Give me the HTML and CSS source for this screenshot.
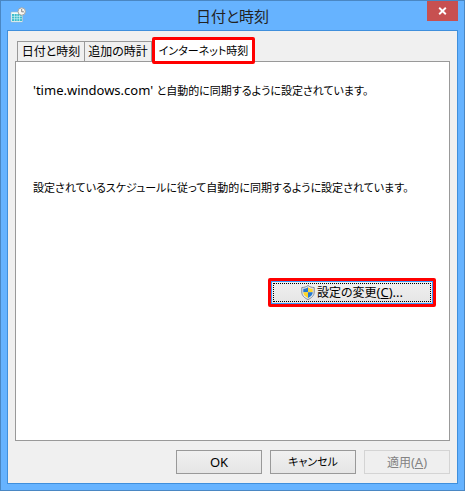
FILE: index.html
```html
<!DOCTYPE html>
<html lang="ja">
<head>
<meta charset="utf-8">
<title>日付と時刻</title>
<link rel="stylesheet" href="styles.css">
</head>
<body>
<div class="window">
  <header class="titlebar">
    <svg class="app-icon" viewBox="0 0 16 16" aria-hidden="true">
      <path d="M1 5h11.500v10H1z" fill="#effcfc" stroke="#a3bcc4" stroke-width=".6"/>
      <path d="M2 7h10v7H2z" fill="#3dbccb"/>
      <path d="M4.500 7v7M7 7v7M9.500 7v7M2 9.400h10M2 11.700h10" stroke="#d9f7f8" stroke-width=".6"/>
      <circle cx="11.700" cy="4.500" r="3.700" fill="#f8f8f4" stroke="#a4a5a2"/>
      <path d="M11.700 2v2.800h2.200" fill="none" stroke="#666" stroke-width=".8"/>
    </svg>
    <h1 class="title">日付と時刻</h1>
    <button class="close" type="button" aria-label="閉じる">
      <svg viewBox="0 0 9 8" aria-hidden="true"><path d="M1.200 .8l6.600 6.400M7.800 .8L1.200 7.200" stroke="#fff" stroke-width="1.900"/></svg>
    </button>
  </header>
  <main class="client">
    <div class="tabs" role="tablist">
      <button class="tab" type="button" role="tab" aria-selected="false">日付と時刻</button>
      <button class="tab" type="button" role="tab" aria-selected="false">追加の時計</button>
      <button class="tab active" type="button" role="tab" aria-selected="true">インターネット時刻</button>
    </div>
    <section class="panel" role="tabpanel">
      <p class="message"><span class="latin">'time.windows.com' </span>と自動的に同期するように設定されています。</p>
      <p class="message">設定されているスケジュールに従って自動的に同期するように設定されています。</p>
      <div class="highlight">
        <button class="button change" type="button">
          <svg class="shield" viewBox="0 0 14 15" aria-hidden="true">
            <path d="M7 .5C5.300 2 3 2.500 .8 2.500V7c0 3.500 2.500 6 6.200 7.500C10.700 13 13.200 10.500 13.200 7V2.500C11 2.500 8.700 2 7 .5z" fill="#e4e8ed" stroke="#76818d" stroke-width=".9"/>
            <path d="M7 2.200C5.500 3.300 4 3.700 2.300 3.800V7.300H7z" fill="#2478cf"/>
            <path d="M7 2.200C8.500 3.300 10 3.700 11.700 3.800V7.300H7z" fill="#ffd629"/>
            <path d="M2.300 7.300H7V13C4 11.700 2.300 9.800 2.300 7.300z" fill="#ffd629"/>
            <path d="M11.700 7.300H7V13C10 11.700 11.700 9.800 11.700 7.300z" fill="#2478cf"/>
          </svg>
          <span>設定の変更<span class="latin">(<u>C</u>)...</span></span>
        </button>
      </div>
    </section>
    <footer class="actions">
      <button class="button" type="button"><span class="latin">OK</span></button>
      <button class="button kana" type="button">キャンセル</button>
      <button class="button" type="button" disabled><span>適用<span class="latin">(<u>A</u>)</span></span></button>
    </footer>
  </main>
</div>
</body>
</html>
```
FILE: styles.css
```css
* {
  box-sizing: border-box;
}

body {
  margin: 0;
  font: 12px/16px "Noto Sans", "Noto Sans CJK JP", sans-serif;
  font-feature-settings: "palt";
  color: #000;
}

button {
  font: inherit;
  font-feature-settings: inherit;
  color: inherit;
  white-space: nowrap;
}

.window {
  display: flex;
  flex-direction: column;
  min-height: 100vh;
  padding: 0 6px 6px;
  border: 1px solid #4a87c3;
  background: #66b3ff;
}

.titlebar {
  display: grid;
  grid-template-columns: 1fr auto 1fr;
  height: 29px;
}

.app-icon {
  width: 16px;
  height: 16px;
  margin: 6px 0 0 3px;
}

.title {
  margin: 0;
  font-size: 15px;
  font-weight: 400;
  line-height: 30px;
  color: #222;
}

.close {
  display: grid;
  place-items: center;
  justify-self: end;
  width: 31px;
  height: 20px;
  padding: 0;
  border: 0;
  background: #c75050;
}

.close svg {
  width: 9px;
  height: 8px;
}

.client {
  display: flex;
  flex: 1;
  flex-direction: column;
  padding: 6px 7px 9px;
  border: 1px solid #3f8fdc;
  background: #f0f0f0;
}

.tabs {
  display: flex;
  align-items: flex-end;
  height: 24px;
  padding-left: 2px;
}

.tab {
  width: 68px;
  height: 20px;
  padding: 0;
  border: 1px solid #999;
  border-bottom: 0;
  background: #f0f0f0;
}

.tab + .tab {
  width: 67px;
  border-left: 0;
}

.tab.tab.active {
  position: relative;
  width: 103px;
  height: 27px;
  margin-bottom: -3px;
  border: 3px solid #f00;
  border-radius: 2px;
  background: #fff;
  font-size: 11px;
}

.panel {
  display: flex;
  flex: 1;
  flex-direction: column;
  padding: 20px 13px 16px 17px;
  border: 1px solid #999;
  background: #fff;
}

.message {
  margin: 0 0 80px;
  font-size: 11px;
  line-height: 17px;
  white-space: nowrap;
}

.latin {
  font-size: 13px;
}

.highlight {
  align-self: flex-end;
  margin-top: 2px;
  border: 3px solid #f00;
  border-radius: 2px;
}

.button {
  display: flex;
  align-items: center;
  justify-content: center;
  width: 86px;
  height: 24px;
  padding: 0;
  border: 1px solid #999;
  background: linear-gradient(#f0f0f0, #e5e5e5);
}

.button:disabled {
  border-color: #d4d4d4;
  background: #efefef;
  color: #838383;
}

.kana {
  font-size: 11px;
}

.change {
  gap: 2px;
  width: 162px;
  height: 23px;
  border-color: #3399ff;
  outline: 1px dotted #000;
  outline-offset: -3px;
}

.shield {
  width: 14px;
  height: 15px;
}

.actions {
  display: flex;
  justify-content: flex-end;
  gap: 8px;
  margin-top: 9px;
}
```
